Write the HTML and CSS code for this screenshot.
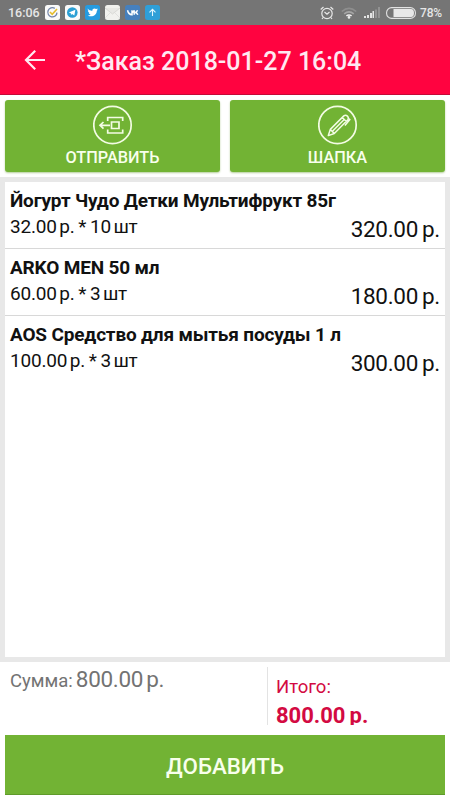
FILE: index.html
```html
<!DOCTYPE html>
<html lang="ru">
<head>
  <meta charset="utf-8">
  <title>Заказ</title>
  <link rel="stylesheet" href="styles.css">
</head>
<body>
  <div class="status">
    <span class="time">16:06</span>
    <div class="apps">
      <svg class="app" viewBox="0 0 15 15">
        <rect width="15" height="15" rx="2.5" fill="#fafafa"/>
        <path d="M9.8 3.4A4.6 4.6 0 1 0 12 7.6" fill="none" stroke="#7385a8" stroke-width="1.3"/>
        <path d="M5 7l2.2 2.3L12 4" fill="none" stroke="#e5bd2e" stroke-width="1.6"/>
      </svg>
      <svg class="app" viewBox="0 0 15 15">
        <rect width="15" height="15" rx="2.5" fill="#fafafa"/>
        <circle cx="7.3" cy="7.5" r="5.3" fill="#2b9fd4"/>
        <path d="M3.8 7.5l6.6-2.7-1.1 5.7-2.2-1.5-1.1 1-.2-1.8z" fill="#fff"/>
      </svg>
      <svg class="app" viewBox="0 0 15 15">
        <rect width="15" height="15" rx="2.5" fill="#259be0"/>
        <path d="M2.5 3.6c1.3 1.5 2.8 2.2 4.8 2.3-.4-2 2.2-3.4 3.8-1.8l1.6-.6-.8 1.3 1.1-.2-1.2 1.2c.1 4.2-4.8 7.2-9.2 4.6 1.2 0 2.3-.3 3-1-1-.1-1.7-.7-2-1.6h.9c-1-.4-1.6-1.2-1.6-2.2l.9.2c-1-.7-1.2-1.5-1.3-2.2z" fill="#fff"/>
      </svg>
      <svg class="app" viewBox="0 0 15 15">
        <rect width="15" height="15" rx="2.5" fill="#f1f1ee"/>
        <path d="M0 3l7.5 6L15 3" fill="#e8e8e5" stroke="#d3d3d0" stroke-width=".8"/>
        <path d="M0 13l5-5M15 13l-5-5" stroke="#dcdcd9" stroke-width=".8"/>
      </svg>
      <svg class="app" viewBox="0 0 15 15">
        <rect width="15" height="15" rx="2.5" fill="#4680bd"/>
        <path d="M2.5 5.2c.7 2.8 2 4.3 4.5 4.5V5.2M7 7.4c1.5-.2 1.9-1 2.2-2.2M9.2 5.2v4.5M12.5 5.2c-.4 1.2-1.2 2-2.3 2.2 1.2.2 2 1 2.6 2.3" fill="none" stroke="#fff" stroke-width="1.5"/>
      </svg>
      <svg class="app" viewBox="0 0 15 15">
        <rect width="15" height="15" rx="2.5" fill="#2f9fd8"/>
        <path d="M7.5 11V4.5M4.5 7.3l3-3 3 3" fill="none" stroke="#e6f6ff" stroke-width="1.1"/>
      </svg>
    </div>
    <div class="indicators">
      <svg width="14" height="14" viewBox="0 0 14 14" fill="none" stroke="#e8e8e8" stroke-width="1.2">
        <circle cx="7" cy="7.5" r="5.2"/>
        <path d="M4.5 6L7 8.3 9.5 6M.7 3.5L3.5 1M13.3 3.5L10.5 1M3.2 11.5L2 13M10.8 11.5L12 13"/>
      </svg>
      <svg class="wifi" width="16" height="12" viewBox="0 0 16 12" fill="none" stroke-width="1.6">
        <path d="M.8 4.5q7.2-6.2 14.4 0" stroke="#8e8e8e"/>
        <path d="M3.2 6.9q4.8-4 9.6 0" stroke="#a5a5a5"/>
        <path d="M5.4 8.9q2.6-1.9 5.2 0" stroke="#eee"/>
        <circle cx="8" cy="10.4" r="1.3" fill="#eee"/>
      </svg>
      <svg class="signal" width="16" height="11" viewBox="0 0 16 11" fill="#e4e4e4">
        <path d="M0 9h2v2H0zM3 8h2v3H3zM6 6h2v5H6zM8.500 4h1.5v7H8.500z"/>
        <path d="M11 2.500h2V11h-2zM14 0h2v11h-2z" fill="#929292"/>
      </svg>
      <svg class="battery" width="30" height="12" viewBox="0 0 30 12">
        <rect x=".6" y=".6" width="28.8" height="10.8" rx="5" fill="none" stroke="#e2e2e2" stroke-width="1.1"/>
        <path d="M7.5 2H25q3 0 3 4t-3 4H7.5z" fill="#e8e8e8"/>
      </svg>
      <span class="percent">78%</span>
    </div>
  </div>

  <header class="header">
    <svg class="back" width="22" height="22" viewBox="0 0 22 22" fill="none" stroke="#ffe8f1" stroke-width="2.2">
      <path d="M21 11H2.5M11.2 1.8L2 11l9.2 9.2"/>
    </svg>
    <h1 class="title">*Заказ 2018-01-27 16:04</h1>
  </header>

  <div class="actions">
    <button class="action">
      <svg width="40" height="40" viewBox="0 0 40 40" fill="none" stroke="#f3fce4" stroke-width="1.7">
        <circle cx="19.5" cy="20" r="18.7"/>
        <path d="M14.700 16v-3.5h15V16M14.700 24.5V28h15v-3.5M17 20.3H7M10.5 17L7 20.3l3.5 3.3"/>
        <path d="M18.500 17H26v6.5h-7.5z"/>
      </svg>
      <span class="caption">ОТПРАВИТЬ</span>
    </button>
    <button class="action">
      <svg width="40" height="40" viewBox="0 0 40 40" fill="none" stroke="#f3fce4" stroke-width="1.5" stroke-linejoin="round">
        <circle cx="19.5" cy="20" r="18.7" stroke-width="1.7"/>
        <path d="M10.3 30.6l2-6.2L25.8 10.9q1.8-1.5 3.6.2 1.8 1.8.4 3.6L16.3 28.5zM12.3 24.4l4 4.1M14.7 26l11.5-11.5M24.3 12.5l4 4M30 13l1.9 1.5-5 6"/>
      </svg>
      <span class="caption">ШАПКА</span>
    </button>
  </div>

  <div class="list">
    <div class="item">
      <div class="name">Йогурт Чудо Детки Мультифрукт 85г</div>
      <div class="details">
        <span class="price">32.00<span class="unit">р.</span> * 10<span class="unit">шт</span></span>
        <span class="total">320.00<span class="unit">р.</span></span>
      </div>
    </div>
    <div class="item">
      <div class="name">ARKO MEN 50 мл</div>
      <div class="details">
        <span class="price">60.00<span class="unit">р.</span> * 3<span class="unit">шт</span></span>
        <span class="total">180.00<span class="unit">р.</span></span>
      </div>
    </div>
    <div class="item">
      <div class="name">AOS Средство для мытья посуды 1 л</div>
      <div class="details">
        <span class="price">100.00<span class="unit">р.</span> * 3<span class="unit">шт</span></span>
        <span class="total">300.00<span class="unit">р.</span></span>
      </div>
    </div>
  </div>

  <div class="summary">
    <div class="sum">Сумма:<span class="sum-value">800.00<span class="unit">р.</span></span></div>
    <div class="grand">
      <div class="grand-label">Итого:</div>
      <div class="grand-value">800.00<span class="unit">р.</span></div>
    </div>
  </div>

  <button class="add">ДОБАВИТЬ</button>
</body>
</html>
```
FILE: styles.css
```css
* {
  box-sizing: border-box;
}

body {
  margin: 0;
  height: 800px;
  display: flex;
  flex-direction: column;
  overflow: hidden;
  background: #fff;
  font-family: Roboto, "Noto Sans", sans-serif;
  color: #111;
}

svg {
  display: block;
}

button {
  border: none;
  padding: 0;
  font-family: inherit;
  font-weight: 500;
  color: #f8ffec;
  background: #72b334;
  cursor: pointer;
}

.status {
  height: 25px;
  flex: none;
  display: flex;
  align-items: center;
  padding: 0 8px;
  background: #757575;
  color: #e6e6e6;
  font-size: 12px;
  font-weight: 500;
}

.time {
  width: 37px;
  font-size: 12.5px;
}

.apps {
  display: flex;
  gap: 5px;
}

.app {
  width: 15px;
  height: 15px;
}

.indicators {
  display: flex;
  align-items: center;
  margin-left: auto;
}

.wifi {
  margin-left: 7px;
}

.signal {
  margin-left: 7px;
}

.battery {
  margin-left: 6px;
}

.percent {
  margin-left: 4px;
  letter-spacing: -0.2px;
}

.header {
  height: 70px;
  flex: none;
  display: flex;
  align-items: center;
  padding: 0 24px;
  background: #ff0340;
  border-bottom: 1px solid #c40a38;
}

.title {
  margin: 3px 0 0 29px;
  font-size: 25px;
  font-weight: 500;
  color: #ffe8f1;
  white-space: nowrap;
}

.actions {
  display: flex;
  gap: 10px;
  height: 82px;
  flex: none;
  padding: 5px;
}

.action {
  flex: 1;
  display: flex;
  flex-direction: column;
  align-items: center;
  padding-top: 5px;
  border-radius: 3px;
  font-size: 16.3px;
  line-height: 20px;
  box-shadow: 0 1px 2px #b5cf9b;
}

.caption {
  margin-top: 3px;
}

.list {
  height: 485px;
  flex: none;
  border: 5px solid #e8e8e8;
}

.item {
  height: 67px;
  padding: 7px 5px 0;
  border-bottom: 1px solid #d8d8d8;
}

.item:last-child {
  border-bottom: none;
}

.name {
  font-size: 19px;
  line-height: 24px;
  font-weight: 700;
  letter-spacing: -0.17px;
  white-space: nowrap;
}

.details {
  display: flex;
  justify-content: space-between;
}

.price {
  font-size: 19px;
  line-height: 27px;
  letter-spacing: -0.2px;
  word-spacing: -0.8px;
}

.price .unit {
  margin-left: 2.5px;
}

.total {
  font-size: 22.5px;
  line-height: 32px;
  letter-spacing: -0.3px;
}

.unit {
  margin-left: 4px;
}

.summary {
  display: flex;
  height: 73px;
  flex: none;
}

.sum {
  width: 267px;
  padding: 3px 0 0 10px;
  font-size: 18.5px;
  line-height: 28px;
  color: #737373;
}

.sum-value {
  margin-left: 3px;
  font-size: 22.5px;
  letter-spacing: -0.3px;
}

.sum-value .unit {
  margin-left: 3px;
}

.grand {
  height: 58px;
  margin-top: 5px;
  padding: 6px 0 0 8px;
  overflow: hidden;
  border-left: 1px solid #e3e3e3;
  color: #d30a42;
}

.grand-label {
  font-size: 18.5px;
  line-height: 28px;
}

.grand-value {
  font-size: 22px;
  line-height: 29px;
  font-weight: 700;
}

.add {
  height: 60px;
  flex: none;
  margin: 0 5px;
  padding-top: 3px;
  border-bottom: 1px solid #5f9a2a;
  font-size: 22.3px;
}
```
